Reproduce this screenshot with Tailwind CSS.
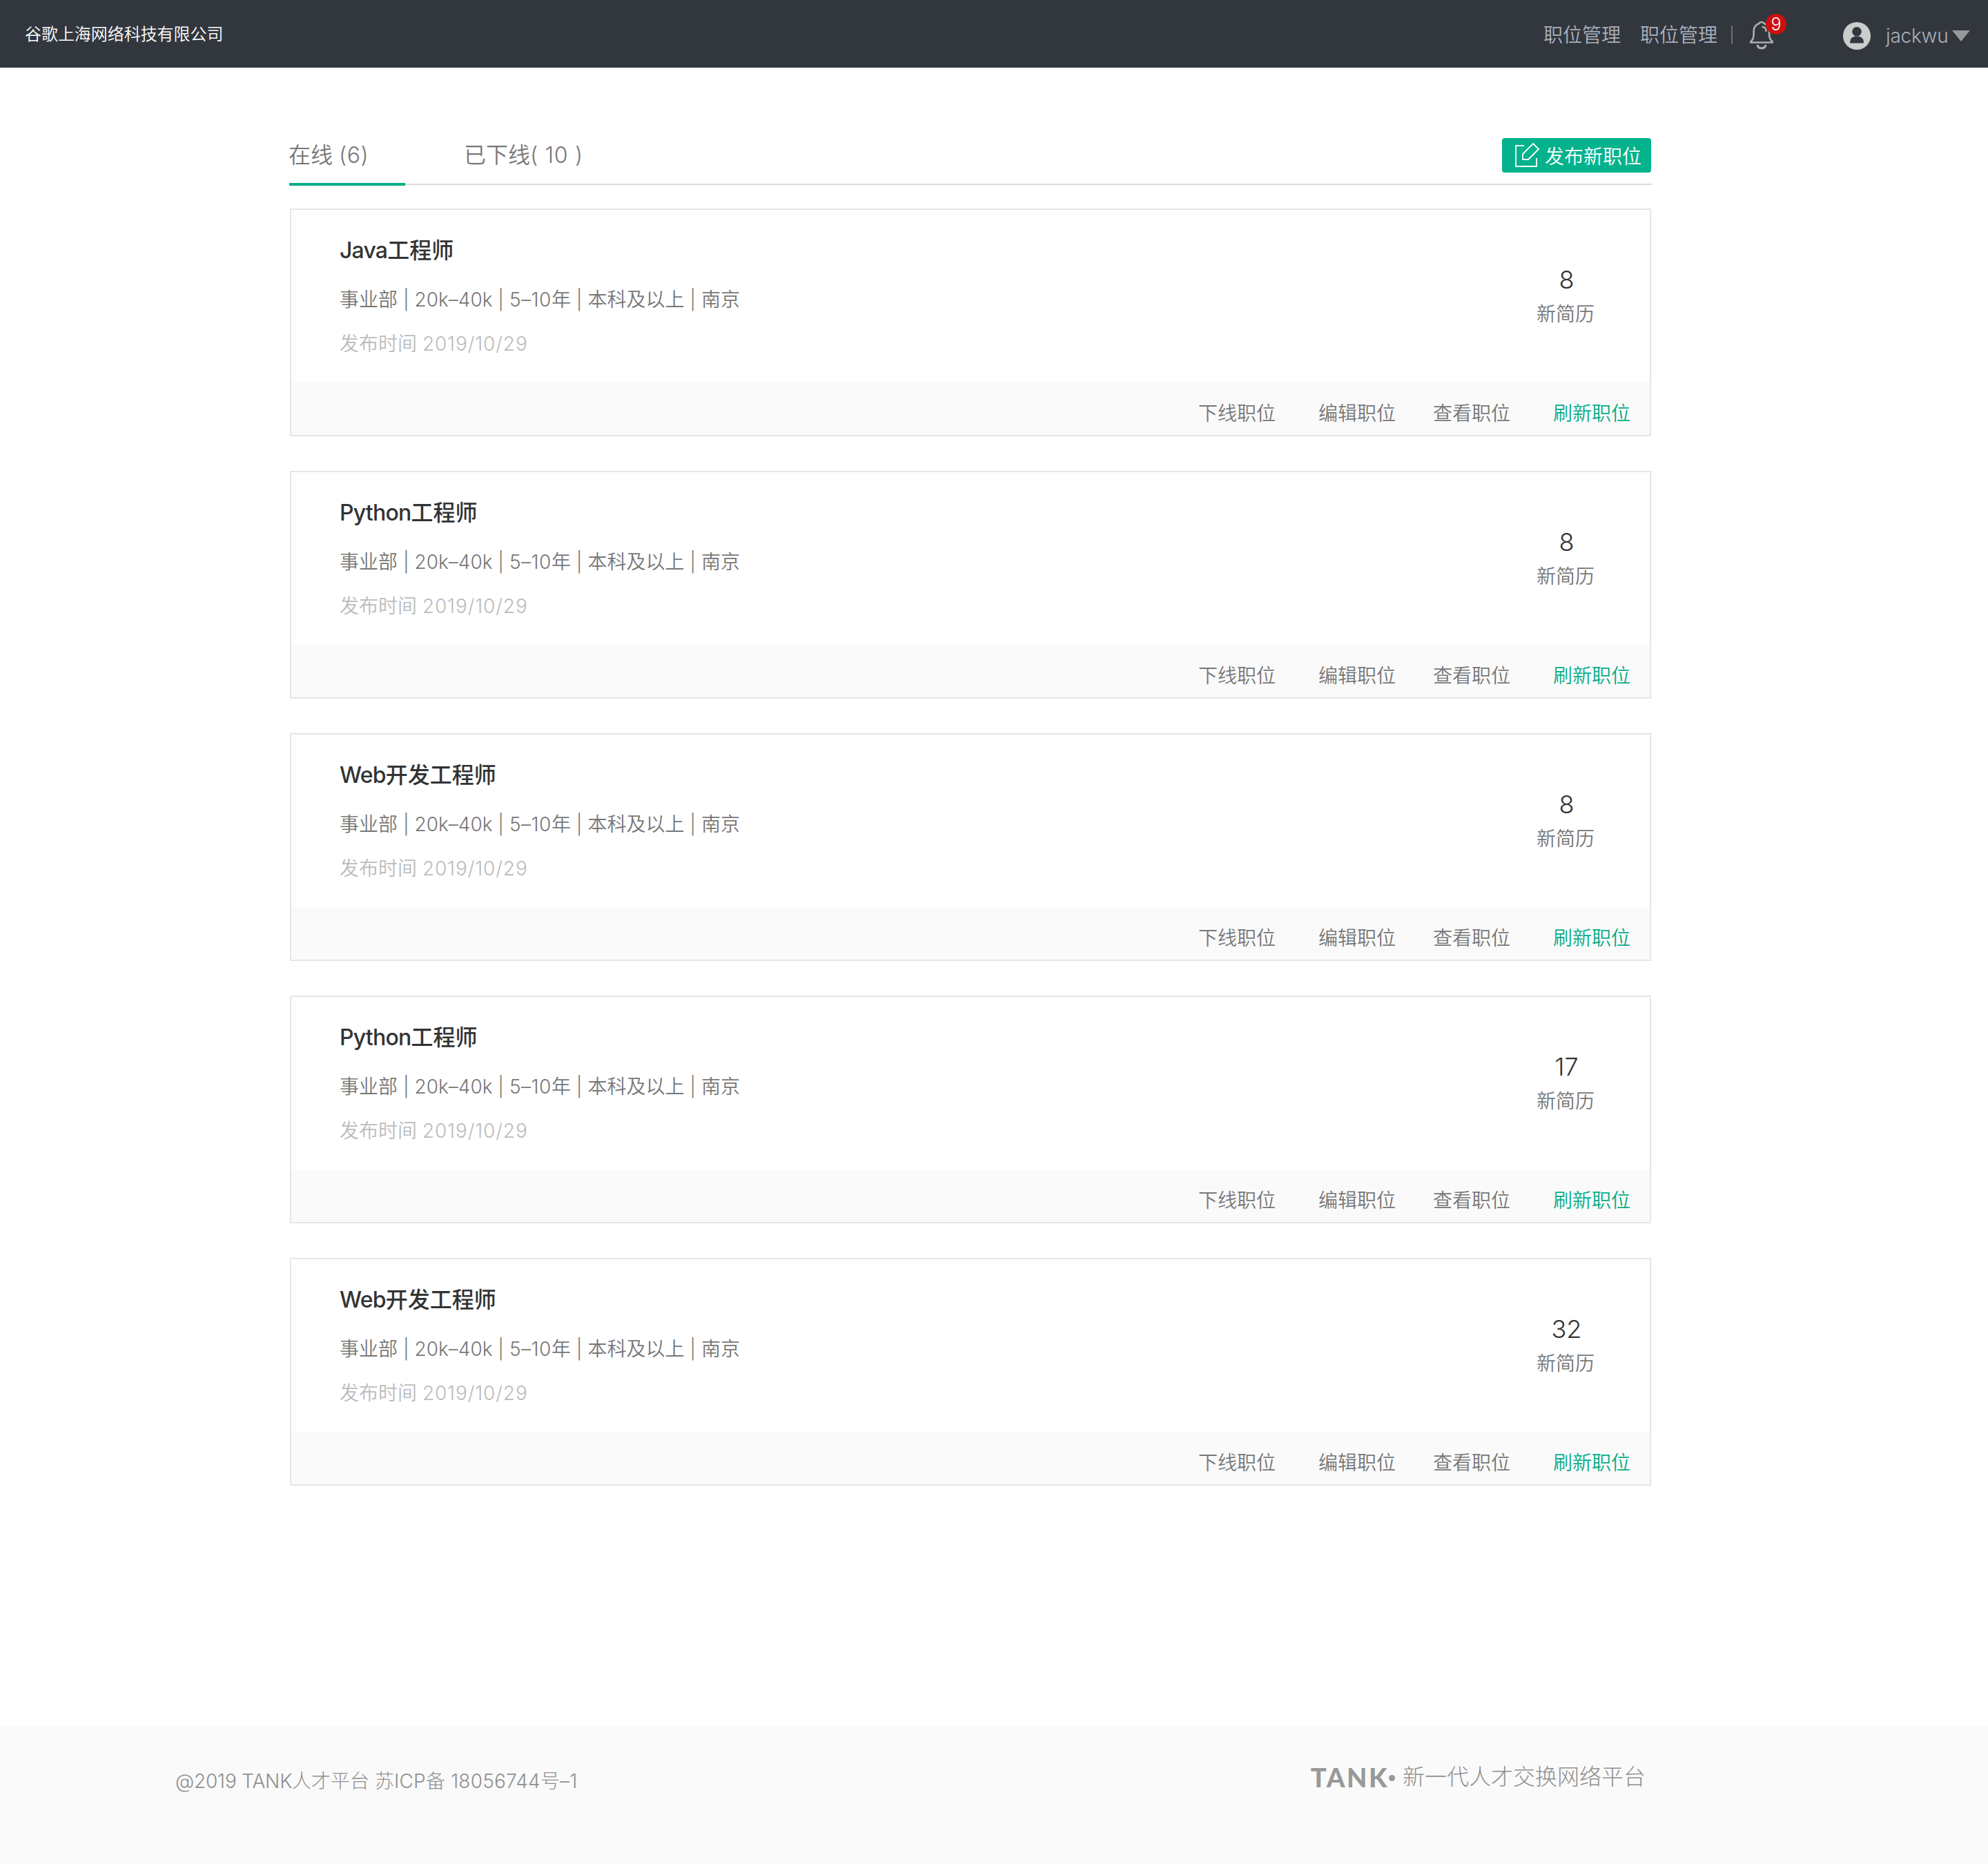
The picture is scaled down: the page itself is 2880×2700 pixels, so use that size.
<!DOCTYPE html>
<html lang="zh-CN">
<head>
<meta charset="utf-8">
<title>职位管理</title>
<script src="https://cdn.jsdelivr.net/npm/@tailwindcss/browser@4"></script>
</head>
<body class="bg-white font-['Inter','Noto_Sans_CJK_SC',sans-serif] font-[350] text-[28px] leading-10 text-[#777]">
<div class="flex h-[2700px] w-[2880px] flex-col">
  <header class="flex h-[98px] items-center bg-[#32373e] pl-9 text-[#abb0bd]">
    <div class="pt-0.5 text-2xl tracking-[-0.05px] text-white">谷歌上海网络科技有限公司</div>
    <nav class="ml-auto flex w-[644px] items-center">
      <a class="pt-[3px]">职位管理</a>
      <a class="ml-7 pt-[3px]">职位管理</a>
      <span class="ml-5 mt-[3px] h-[27px] w-0.5 bg-[#706e6c]"></span>
      <div class="relative ml-6 mt-[3px]">
        <svg class="h-11 w-9" viewBox="0 0 36 44" fill="none" stroke="#adadad" stroke-width="2.6" stroke-linecap="round" stroke-linejoin="round"><path d="M2.200 31.500C5.500 28 6.600 26 6.600 20V17C6.600 10 9.500 6.500 14.500 5C15.500 2.300 20.500 2.300 21.500 5C26.500 6.500 29 10 29 17V20C29 26 30.500 28 33.800 31.500V32.500H2.200Z"/><path d="M12 36C13 42.500 23 42.500 24 36" stroke-width="3.200" stroke-linecap="butt"/><path d="M19.500 10C23 10.500 24.500 12.500 24.500 16"/></svg>
        <span class="absolute -top-[9px] left-6 flex size-[30px] items-center justify-center rounded-full bg-[#cc0f0f] text-[25px] font-light text-white">9</span>
      </div>
      <svg class="ml-[100px] mt-[5px] size-10" viewBox="0 0 40 40"><circle cx="20" cy="20" r="20" fill="#ccc"/><circle cx="20" cy="13.800" r="6.800" fill="#32373e"/><path d="M10 30.500C10 23 14 21.500 17.500 20.500H22.500C26 21.500 30 23 30 30.500Z" fill="#32373e"/></svg>
      <a class="ml-[22px] mt-1.5 tracking-[-0.2px]">jackwu</a>
      <svg class="ml-[5px] mt-1.5 h-4 w-[26px]" viewBox="0 0 26 16"><path d="M0 0H26L13 16Z" fill="#999"/></svg>
    </nav>
  </header>

  <main class="ml-[419px] w-[1974px] flex-1 pt-[102px]">
    <div class="flex h-[68px] justify-between border-b-2 border-[#ddd]">
      <div class="flex text-[32px]">
        <a class="h-[69px] w-[168px] border-b-4 border-[#07ad85] pt-[5px]"><span class="-ml-px">在线 <span class="tracking-[0.6px]">(6)</span></span></a>
        <a class="ml-[85px] pt-[5px]">已下线<span class="tracking-[0.7px]">( 10 )</span></a>
      </div>
      <button class="mr-px flex h-[50px] w-[216px] items-center rounded bg-[#04b38c] pl-[19px] text-white">
        <svg class="size-9" viewBox="0 0 36 36" fill="none" stroke="#fff" stroke-width="1.800"><path d="M13 4H1V34H31V22"/><path d="M11 24V16L26 1L34 9L19 24Z"/></svg>
        <span class="ml-[7px] pt-[3px]">发布新职位</span>
      </button>
    </div>
    <section id="jobs" class="ml-px mt-[34px] flex w-[1972px] flex-col gap-[50px]"></section>
  </main>

  <footer class="flex h-[200px] justify-between bg-[#fafafa] pl-[254px] pr-[496px] text-[#999]">
    <p class="pt-[60px] font-light text-[#8f8f8f]"><span class="tracking-[-0.2px]">@2019 TANK</span>人才平台 苏<span class="tracking-[0.2px]">ICP备 18056744号–1</span></p>
    <p class="flex pt-[54px] text-[32px]"><span class="font-['Lato'] text-[38px] font-black tracking-[2.6px]">TANK</span><span class="mr-[11px] mt-[17px] size-[9px] rounded-full bg-[#999]"></span><span class="font-light text-[#8f8f8f]">新一代人才交换网络平台</span></p>
  </footer>
</div>
<script>
const jobs = [['Java', '工程师', 8], ['Python', '工程师', 8], ['Web', '开发工程师', 8], ['Python', '工程师', 17], ['Web', '开发工程师', 32]];
document.getElementById('jobs').innerHTML = jobs.map(([tech, role, count]) => `
  <article class="flex h-[330px] flex-col border-2 border-[#e6e6e6]">
    <div class="flex flex-1 justify-between pl-[70px] pr-[80px]">
      <div>
        <h2 class="pt-[39px] text-[32px] font-medium text-[#333]"><span class="tracking-[-0.8px]">${tech}</span>${role}</h2>
        <p class="pt-[31px]">事业部 | 20k–40k | <span class="tracking-[0.5px]">5–10</span>年 | 本科及以上 | 南京</p>
        <p class="pt-6 text-[#bbb]">发布时间 <span class="tracking-[0.85px]">2019/10/29</span></p>
      </div>
      <div class="pt-[81px] text-center">
        <div class="pl-[3px] text-4xl text-[#333]">${count}</div>
        <div class="pt-[10px]">新简历</div>
      </div>
    </div>
    <div class="flex h-[76px] items-center justify-end bg-[#fafafa] pr-7 pt-[14px]">
      <a>下线职位</a><a class="ml-[62px]">编辑职位</a><a class="ml-[54px]">查看职位</a><a class="ml-[62px] text-[#07ad85]">刷新职位</a>
    </div>
  </article>`).join('');
</script>
</body>
</html>
